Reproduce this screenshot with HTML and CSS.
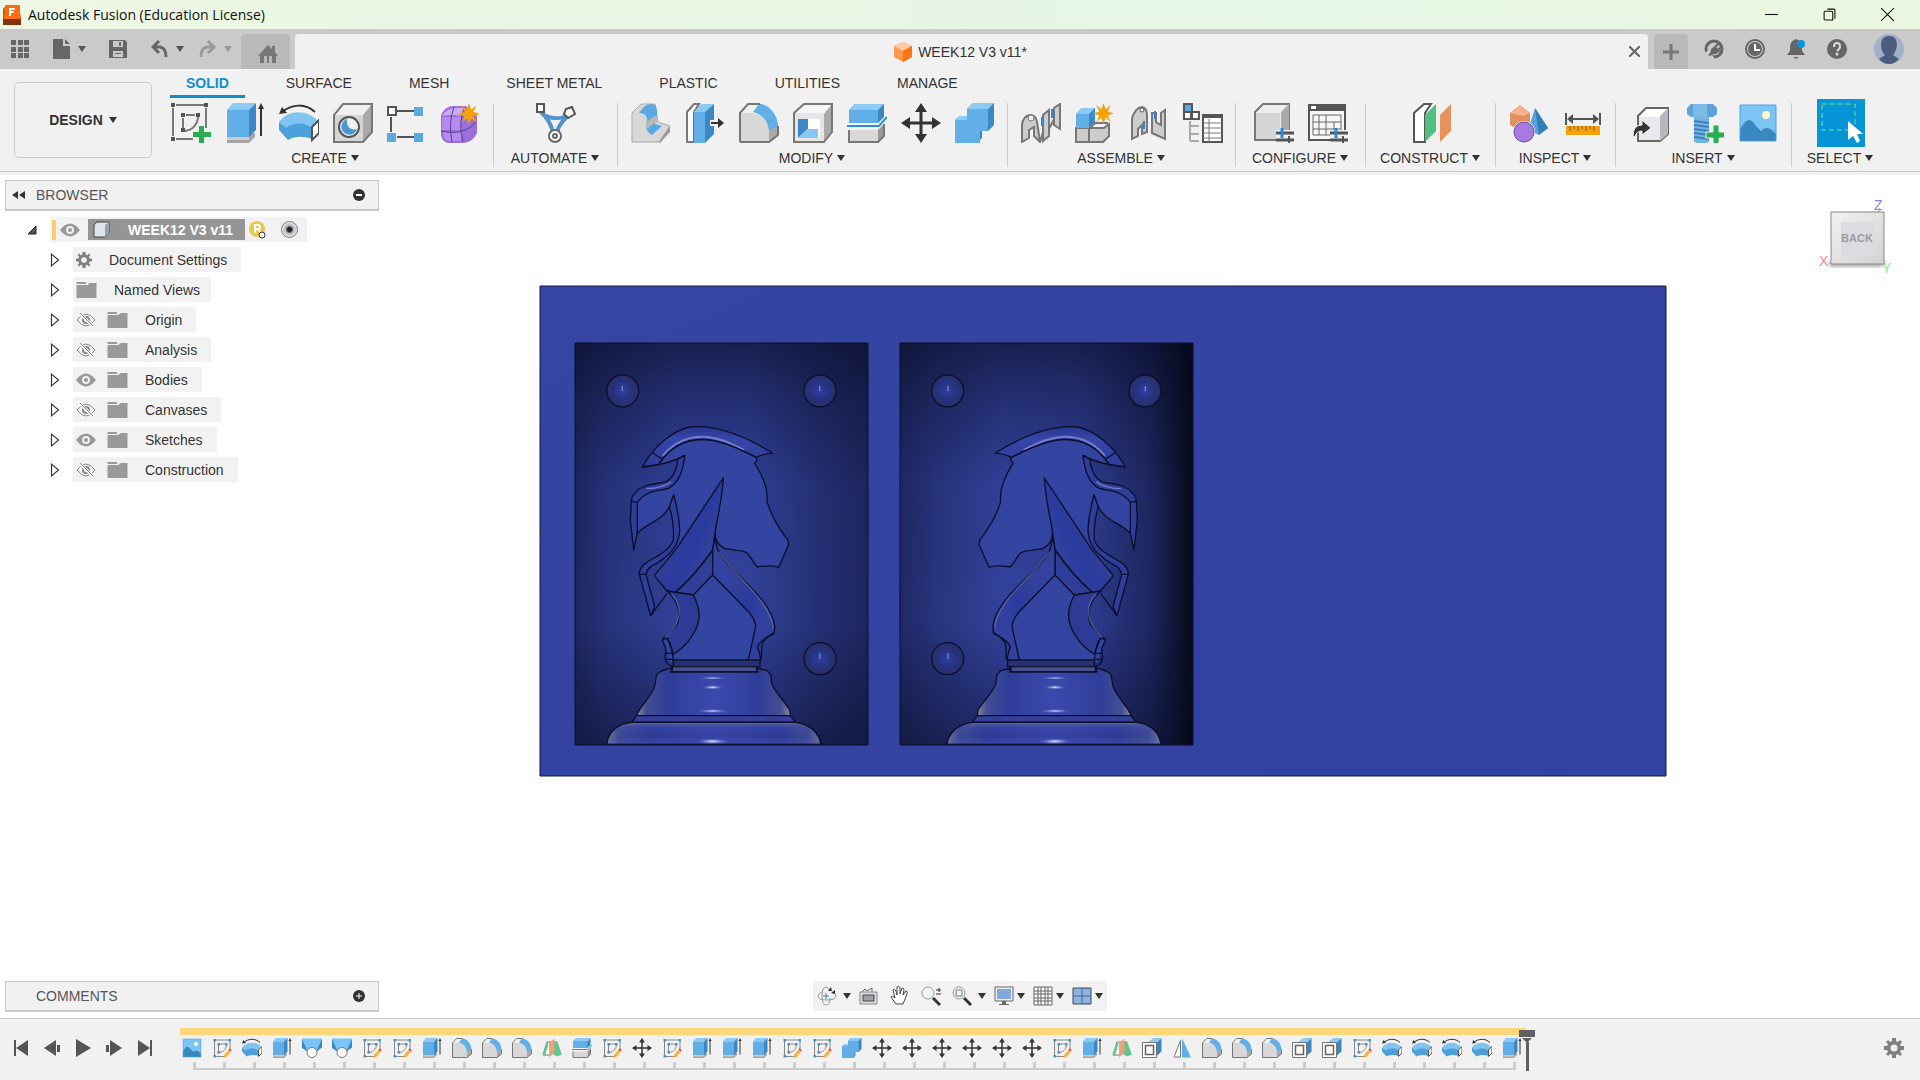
FILE: index.html
```html
<!DOCTYPE html>
<html lang="en">
<head>
<meta charset="utf-8">
<title>Autodesk Fusion (Education License)</title>
<link rel="stylesheet" href="styles.css">
</head>
<body>
<svg class="defs" aria-hidden="true">
  <symbol id="sketch" viewBox="0 0 40 40"><path d="M2 5v28M5 2h28M35 5v20M5 36h17M12 15v10M15 12h9M27 13c0 8-5 14-13 15" fill="none" stroke="#777" stroke-width="2"/><path d="M0 0h4v4H0zM33 0h4v4h-4zM0 34h4v4H0zM10 10h4v4h-4zM25 10h4v4h-4zM10 25h4v4h-4z" fill="#555"/><path d="M28 23h5v6h7v5h-7v6h-5v-6h-6v-5h6z" fill="#27ae4f"/></symbol>
  <symbol id="sketchedit" viewBox="0 0 40 40"><path d="M5 6v28M6 4h28M36 6v18M6 37h18M13 14v14M15 12h12M29 13c0 8-6 15-14 16" fill="none" stroke="#888" stroke-width="2"/><path d="M3 2h5v5H3zM33 2h5v5h-5zM3 34h5v5H3zM11 10h5v5h-5zM26 10h5v5h-5zM11 26h5v5h-5z" fill="#3b95d8"/><path d="M24 34l9-11 5 4-9 11-6 2z" fill="#f5b342"/><path d="M33 23l2-2q4 0 4 5l-1 1z" fill="#ef3d2e"/></symbol>
  <symbol id="extrude" viewBox="0 0 40 40"><path d="M2 36l6-6h22v4l-6 6H2z" fill="#a5a5a5"/><path d="M2 33h22v4H2z" fill="#ccc"/><path d="M2 7l6-7h23l-7 7z" fill="#8ccbf5"/><path d="M2 7h22v27H2z" fill="#62aee6"/><path d="M24 7l7-7v27l-7 7z" fill="#3b88c4"/><path d="M36 5v28" stroke="#333" stroke-width="2"/><path d="M33 6l3-6 3 6z" fill="#333"/></symbol>
  <symbol id="revolve" viewBox="0 0 40 40"><path d="M3 9C13 1 26 0 36 9" fill="none" stroke="#333" stroke-width="2"/><path d="M0 11l3-7 5 6z" fill="#333"/><path d="M0 19C9 6 29 6 40 19L33 25C27 20 14 20 7 27z" fill="#80c4f2"/><path d="M0 19l7 6c8-6 19-6 26 0v11c-8-3-17-3-24 1L0 27z" fill="#4d9fdc"/><path d="M33 24l7-7v13l-7 7z" fill="#fff" stroke="#555" stroke-width="2"/></symbol>
  <symbol id="hole" viewBox="0 0 40 40"><path d="M1 12L10 1h29l-9 11z" fill="#f0f0f0"/><path d="M30 12l9-11v28l-9 10z" fill="#aaa"/><path d="M1 12h29v27H1z" fill="#d5d5d5"/><path d="M1 39V12L10 1h29v28l-9 10z" fill="none" stroke="#777" stroke-width="2"/><circle cx="16" cy="24" r="10" fill="#eee" stroke="#555" stroke-width="2"/><path d="M14 16a8 8 0 1 0 10 10c-6 2-11-2-10-10z" fill="#4a98d3"/></symbol>
  <symbol id="pattern" viewBox="0 0 40 40"><path d="M10 8h17M4 14v15M10 34h17" stroke="#555" stroke-width="2"/><path d="M1 4h8v8H1z" fill="#fff" stroke="#555" stroke-width="2"/><path d="M27 4h9v9h-9zM0 30h9v9H0zM27 30h9v9h-9z" fill="#5ba9e0"/></symbol>
  <symbol id="form" viewBox="0 0 40 40"><path d="M0 12Q4 3 13 3h12l11 10v17q-4 9-13 10H7q-7-2-7-9z" fill="#9a6fdb"/><path d="M1 13q3-6 12-8h12l-5 8q-12-2-19 0z" fill="#c9adf3"/><path d="M1 14h19v13H1zM2 29h18v9H7q-5-2-5-9z" fill="#b48cf0"/><path d="M0 28q15 3 21 0 10-3 14-10M13 4q-6 16-2 35M23 5q-6 16-1 34" fill="none" stroke="#5c3e93" stroke-width="1"/><use href="#star" x="17" y="0" width="22" height="22"/></symbol>
  <symbol id="star" viewBox="0 0 20 20"><path d="M10 0l2 6 5-4-3 6 6 2-6 2 3 6-5-4-2 6-2-6-5 4 3-6-6-2 6-2-3-6 5 4z" fill="#f5a10a"/></symbol>
  <symbol id="automate" viewBox="0 0 40 40"><path d="M4 8Q14 17 17 29M36 10Q24 18 21 29M6 11q14 8 27 1" fill="none" stroke="#5095cc" stroke-width="4"/><path d="M15 17h9l-4 8z" fill="#f0f0f0"/><path d="M1 1h7v8H1zM30 6l6-2 3 7-7 4-4-4z" fill="#fff" stroke="#555" stroke-width="2"/><circle cx="19" cy="33" r="6" fill="#fff" stroke="#666" stroke-width="2"/><circle cx="19" cy="33" r="2" fill="none" stroke="#666" stroke-width="2"/></symbol>
  <symbol id="presspull" viewBox="0 0 40 40"><path d="M1 10L10 1h14l3 18 12 4-11 16H1z" fill="#d8d8d8" stroke="#aaa" stroke-width="1"/><path d="M28 39l11-16v6l-10 11z" fill="#999"/><path d="M8 10Q14 0 22 1q5 2 4 12-3 6-2 8l7 2-10 9q-8-4-5-13 1-9-8-9z" fill="#5ba9e0"/><path d="M15 19l10-7 1 6-10 8z" fill="#b8b8b8"/></symbol>
  <symbol id="offset" viewBox="0 0 40 40"><path d="M2 39V9l7-8h5L9 9v30z" fill="#fff" stroke="#777" stroke-width="2"/><path d="M9 9h11v31H9z" fill="#62aee6"/><path d="M9 9l7-8h13l-8 8z" fill="#8ccbf5"/><path d="M20 9l9-8v30l-9 9z" fill="#3b88c4"/><path d="M25 20h10" stroke="#f1f1f1" stroke-width="6"/><path d="M26 20h9" stroke="#333" stroke-width="2"/><path d="M33 15l6 5-6 5z" fill="#333"/></symbol>
  <symbol id="fillet" viewBox="0 0 40 40"><path d="M1 10L9 1h12c10 2 18 12 18 22v9l-9 7H1z" fill="#efefef"/><path d="M30 28l9-6v10l-9 7z" fill="#aaa"/><path d="M1 10h12c9 1 17 9 17 18v11H1z" fill="#d8d8d8"/><path d="M20 1h2c10 2 17 12 17 22l-9 5C29 17 22 11 14 9z" fill="#62aee6"/><path d="M1 39V10L9 1h12M1 39h29l9-7v-9" fill="none" stroke="#777" stroke-width="2"/></symbol>
  <symbol id="shell" viewBox="0 0 40 40"><path d="M1 10L11 1h28l-8 10z" fill="#f7f7f7"/><path d="M31 11l8-10v28l-8 10z" fill="#aaa"/><path d="M1 10h30v29H1z" fill="#e5e5e5"/><path d="M1 39V10l10-9h28v28l-8 10z" fill="none" stroke="#777" stroke-width="2"/><path d="M5 16h22v19H5z" fill="#fff"/><path d="M5 16h10v10L5 35z" fill="#3b88c4"/><path d="M5 35l9-9h11v9z" fill="#86c7f4"/></symbol>
  <symbol id="split" viewBox="0 0 40 40"><path d="M2 7l6-6h29v13l-6 6H2z" fill="#3b88c4"/><path d="M2 7l6-6h29l-6 6z" fill="#8ccbf5"/><path d="M2 7h29v13H2z" fill="#62aee6"/><path d="M0 23h32l8-9" fill="none" stroke="#318ed5" stroke-width="2"/><path d="M2 27h29v12H2z" fill="#d8d8d8"/><path d="M31 27l6-6v12l-6 6z" fill="#999"/><path d="M2 27v12h29l6-6V21" fill="none" stroke="#777" stroke-width="2"/></symbol>
  <symbol id="move" viewBox="0 0 40 40"><path d="M20 7v26M7 20h26" stroke="#333" stroke-width="3"/><path d="M20 0l6 9H14zM20 40l6-9H14zM0 20l9-6v12zM40 20l-9-6v12z" fill="#333"/></symbol>
  <symbol id="combine" viewBox="0 0 40 40"><path d="M0 17l5-4h7V6l6-6h21v22l-6 6h-6v7l-5 5H0z" fill="#3b88c4"/><path d="M0 17l5-4h10l-3 4zM12 6l6-6h21l-6 6z" fill="#8ccbf5"/><path d="M12 6h21v22h-8v12H0V17h12z" fill="#62aee6"/></symbol>
  <symbol id="joint" viewBox="0 0 40 40"><g fill="#ccc" stroke="#777" stroke-width="2"><path d="M1 39V22q1-9 8-10 6 0 7 7l3 20-6-6v-9l-5 3v8z"/><path d="M22 38V12l6-5v26zM33 22V5l6-4v25z"/><path d="M19 39l3-10M28 26l5-10"/></g><circle cx="10" cy="15" r="3" fill="#eee" stroke="#777"/><path d="M21 14v9M31 6v9" stroke="#2889d8" stroke-width="2"/></symbol>
  <symbol id="component" viewBox="0 0 40 40"><path d="M1 25h28l5-4v12l-6 6H1z" fill="#ccc" stroke="#777" stroke-width="2"/><path d="M1 25V11l6-6h13v14l-6 6z" fill="#3b88c4"/><path d="M1 11h13v14H1z" fill="#62aee6"/><path d="M1 11l6-6h13l-6 6z" fill="#8ccbf5"/><path d="M14 25v14M15 25l5-5h13" fill="none" stroke="#777" stroke-width="2"/><use href="#star" x="18" y="0" width="21" height="21"/></symbol>
  <symbol id="asbuilt" viewBox="0 0 40 40"><g fill="#ccc" stroke="#777" stroke-width="2"><path d="M3 36V15Q7 4 13 4q5 1 5 8v17l-5 2v-9l-4 4v7z"/><path d="M23 10v20l13 6V7l-4 3v12l-5-3v-9z"/></g><circle cx="13" cy="7" r="2" fill="#fff" stroke="#555"/><path d="M15 18v8M26 8v8" stroke="#2889d8" stroke-width="2"/></symbol>
  <symbol id="bom" viewBox="0 0 40 40"><path d="M1 1h8v8H1z" fill="#5ba9e0" stroke="#555" stroke-width="2"/><path d="M1 9h7v7H1zM9 9h7v7H9z" fill="#fff" stroke="#555" stroke-width="2"/><path d="M7 18v20M7 23h9M7 31h9M7 38h9" stroke="#aaa" stroke-width="2"/><path d="M20 12h19v27H20z" fill="#fff" stroke="#555" stroke-width="2"/><path d="M20 13h19" stroke="#555" stroke-width="4"/><path d="M20 20h19M20 25h19M20 30h19M20 35h19M26 16v23" stroke="#777" stroke-width="1"/></symbol>
  <symbol id="confbox" viewBox="0 0 40 40"><path d="M1 9l8-8h26v28l-8 8H1z" fill="#ededed" stroke="#777" stroke-width="2"/><path d="M2 10h24v26H2z" fill="#d5d5d5"/><path d="M27 9l8-8v28l-8 8z" fill="#aaa"/><use href="#sliders"/></symbol>
  <symbol id="sliders" viewBox="0 0 40 40"><path d="M22 27h18v13H22z" fill="#f1f1f1"/><path d="M22 30h18M22 37h18" stroke="#555" stroke-width="3"/><path d="M28 25v10" stroke="#2889d8" stroke-width="3"/><path d="M35 33v8" stroke="#555" stroke-width="2"/></symbol>
  <symbol id="conftable" viewBox="0 0 40 40"><path d="M1 2h36v35H1z" fill="#f7f7f7" stroke="#555" stroke-width="2"/><path d="M1 5h36" stroke="#555" stroke-width="6"/><path d="M3 3h5v3H3z" fill="#fff"/><path d="M5 12h28v20H5zM5 19h28M5 26h28M11 12v20M18 12v20M26 19v13" fill="none" stroke="#666" stroke-width="1"/><use href="#sliders"/></symbol>
  <symbol id="plane" viewBox="0 0 40 40"><path d="M3 10L13 1h7l-6 9v29H3z" fill="#fff" stroke="#555" stroke-width="2"/><path d="M14 12L25 1v27L14 39z" fill="#4fc07f"/><path d="M29 12L40 1v27L29 39z" fill="#e8935a"/></symbol>
  <symbol id="shapes" viewBox="0 0 40 40"><path d="M11 2l10 8v12l-10 6-10-6V10z" fill="#e2905e"/><path d="M11 2l10 8-7 3-13-3z" fill="#f3b48d"/><path d="M26 5l13 20-9 7-11-5z" fill="#5aa2dd"/><path d="M26 5l13 20-9 7z" fill="#357fb9"/><circle cx="15" cy="29" r="11" fill="#f1f1f1"/><circle cx="15" cy="29" r="10" fill="#a67ae0" stroke="#6e49a6"/></symbol>
  <symbol id="measure" viewBox="0 0 40 40"><path d="M3 10v12M37 10v12M5 16h30" stroke="#555" stroke-width="2"/><path d="M4 16l6-5v10zM36 16l-6-5v10z" fill="#555"/><path d="M3 23h34v9H3z" fill="#f5a10a"/><path d="M7 23v5M11 23v3M15 23v5M19 23v3M23 23v5M27 23v3M31 23v5" stroke="#7b520b" stroke-width="1"/></symbol>
  <symbol id="insert" viewBox="0 0 40 40"><path d="M8 13l8-8h22v26l-8 7H8z" fill="#fff" stroke="#666" stroke-width="2"/><path d="M30 13l8-8v26l-8 7z" fill="#b5b8c0"/><path d="M9 14h21v23H9z" fill="#e8e9ed"/><path d="M3 33q0-11 9-11v-5l9 8-9 7v-4q-6 0-7 6z" fill="#333" stroke="#f1f1f1" stroke-width="1"/></symbol>
  <symbol id="bolt" viewBox="0 0 40 40"><path d="M3 5l4-4h22l4 4v6l-4 3H7l-4-3z" fill="#5ba3d9"/><path d="M9 1h14v13H9z" fill="#7cbbe8"/><path d="M10 14h15v25q-7 3-15 0z" fill="#74b4e3"/><path d="M10 18l15 2M10 22l15 2M10 26l15 2M10 30l15 2M10 34l15 2" stroke="#3b80b8" stroke-width="2"/><path d="M29 22h6v7h6v6h-6v6h-6v-6h-7v-6h7z" fill="#27ae4f" stroke="#f1f1f1"/></symbol>
  <symbol id="picture" viewBox="0 0 40 40"><path d="M2 2h36v36H2z" fill="#7cc4f5"/><path d="M2 27Q10 10 18 23l5 5q6-7 15 3v7H2z" fill="#3a88c2"/><circle cx="28" cy="12" r="4" fill="#ffffd0"/><path d="M2 2h36v36H2z" fill="none" stroke="#4a9fdb"/></symbol>
  <symbol id="select" viewBox="0 0 48 48"><path d="M5 5h33v26H5z" fill="none" stroke="#6fe38d" stroke-width="1" stroke-dasharray="5 3"/><path d="M31 22v19l5-4 4 7 3-2-3-7h6z" fill="#fff"/></symbol>
  <symbol id="loft" viewBox="0 0 40 40"><path d="M0 1h40l-10 27H12z" fill="#7cc4f5"/><path d="M0 1l12 27L0 20zM40 1L28 28l12-9z" fill="#3a88c2"/><circle cx="20" cy="29" r="10" fill="#fff" stroke="#777" stroke-width="2"/></symbol>
  <symbol id="draft" viewBox="0 0 40 40"><path d="M10 8h8v26H2z" fill="#fff" stroke="#777" stroke-width="2"/><path d="M22 7h8l9 26-9 3-8-4z" fill="#5fc98c" stroke="#6aa"/><path d="M14 10l11-9v28l-11 10z" fill="#eda27b"/><path d="M10 8L1 33l5 2 7-23z" fill="#5fc98c"/></symbol>
  <symbol id="scale" viewBox="0 0 40 40"><path d="M12 12L23 1h16v26L27 38z" fill="#3a88c2"/><path d="M12 9l9-8h18l-9 8z" fill="#8ccbf5"/><path d="M1 9h28v30H1z" fill="#fff" stroke="#777" stroke-width="2"/><path d="M7 15h16v18H7z" fill="#fff" stroke="#666" stroke-width="3"/></symbol>
  <symbol id="mirror" viewBox="0 0 40 40"><path d="M17 5v33H4z" fill="#fff" stroke="#777" stroke-width="2"/><path d="M20 0l18 39H20z" fill="#62aee6"/></symbol>
  <symbol id="gear" viewBox="0 0 20 20"><path fill-rule="evenodd" d="M8 0h4v3l2 1 2-2 2 2-2 3 1 1h3v4h-3l-1 2 2 2-2 2-2-2-2 1v3H8v-3l-2-1-2 2-2-2 2-2-1-2H0V8h3l1-2-2-2 2-2 2 2 2-1zM10 6.500a3.500 3.500 0 1 0 0 7 3.500 3.500 0 0 0 0-7z" fill="#808080"/></symbol>
  <symbol id="folder" viewBox="0 0 20 16"><path d="M0 0h9l1 2H0zM0 3h11l2-2h7v15H0z" fill="#999"/></symbol>
  <symbol id="eye" viewBox="0 0 20 14"><path d="M0 7Q10-6 20 7 10 20 0 7z" fill="#999"/><circle cx="10" cy="7" r="3" fill="none" stroke="#f1f1f1" stroke-width="2"/></symbol>
  <symbol id="eyeoff" viewBox="0 0 20 14"><path d="M1 7Q10-5 19 7 10 19 1 7z" fill="none" stroke="#888"/><circle cx="10" cy="7" r="3" fill="none" stroke="#888" stroke-width="2"/><path d="M4 1l13 12" stroke="#f1f1f1" stroke-width="3"/><path d="M4 0l13 13" stroke="#888"/></symbol>
  <symbol id="tri" viewBox="0 0 8 12"><path d="M1 1v10l6-5z" fill="#fff" stroke="#333" stroke-width="1"/></symbol>
  <symbol id="down" viewBox="0 0 8 6"><path d="M0 0h8L4 6z" fill="currentColor"/></symbol>
</svg>

<header class="titlebar">
  <svg class="app-logo" viewBox="0 0 18 20"><path d="M3 1l13-1 2 14v6H0V4z" fill="#c84f08"/><path d="M2 0h15v15H1z" fill="#ff6b0a"/><path d="M0 14h18v6H0z" fill="#843309"/><path d="M7 11V4h5M7 7h4" stroke="#fff" stroke-width="2" fill="none"/></svg>
  <h1 class="app-title">Autodesk Fusion (Education License)</h1>
  <div class="window-buttons">
    <button aria-label="Minimize"><svg viewBox="0 0 12 12"><path d="M0 6h12" stroke="#111"/></svg></button>
    <button aria-label="Restore"><svg viewBox="0 0 12 12"><path d="M1 4q0-1 1-1h6q1 0 1 1v7H2q-1 0-1-1zM4 1h6q1 0 1 1v8" fill="none" stroke="#111"/></svg></button>
    <button aria-label="Close"><svg viewBox="0 0 12 12"><path d="M0 0l12 12M12 0L0 12" stroke="#111"/></svg></button>
  </div>
</header>

<div class="tabbar">
  <div class="quick">
    <button aria-label="Data panel"><svg width="18" height="18" viewBox="0 0 18 18"><path d="M0 0h5v5H0zM7 0h5v5H7zM13 0h5v5h-5zM0 7h5v5H0zM7 7h5v5H7zM13 7h5v5h-5zM0 13h5v5H0zM7 13h5v5H7zM13 13h5v5h-5z" fill="#666"/></svg></button>
    <button class="file" aria-label="File"><svg width="17" height="20" viewBox="0 0 17 20"><path d="M0 0h10v7h7v13H0zM12 0l5 5h-5z" fill="#666"/></svg><svg class="arrow"><use href="#down"/></svg></button>
    <button class="save" aria-label="Save"><svg width="18" height="18" viewBox="0 0 18 18"><path fill-rule="evenodd" d="M0 0h16l2 2v16H0zM4 1v6h10V1zM4 11v6h10v-6z" fill="#666"/><path d="M10 2h2v4h-2zM6 13h6v1H6z" fill="#666"/></svg></button>
    <button class="undo" aria-label="Undo"><svg width="17" height="18" viewBox="0 0 17 18"><path d="M2 7h7q6 1 6 10M8 1L2 7l6 6" fill="none" stroke="#666" stroke-width="3"/></svg><svg class="arrow"><use href="#down"/></svg></button>
    <button class="redo" aria-label="Redo"><svg width="17" height="18" viewBox="0 0 17 18"><path d="M15 7H8q-6 1-6 10M9 1l6 6-6 6" fill="none" stroke="#999" stroke-width="3"/></svg><svg class="arrow"><use href="#down"/></svg></button>
  </div>
  <button class="home" aria-label="Home"><svg width="20" height="18" viewBox="0 0 20 18"><path d="M10 0l4 4V1h3v6l3 4h-2v7h-4v-7h-3v7H9v-7H6v7H2v-7H0z" fill="#777"/></svg></button>
  <div class="doc-tab">
    <svg width="18" height="20" viewBox="0 0 18 20"><path d="M9 0l9 4v11l-9 5-9-5V4z" fill="#ff9a4d"/><path d="M9 0l9 4-9 5-9-5z" fill="#ffc9a3"/><path d="M9 9l9-5v11l-9 5z" fill="#ff7410"/></svg>
    <span>WEEK12 V3 v11*</span>
    <button class="close" aria-label="Close document"><svg width="11" height="11" viewBox="0 0 11 11"><path d="M0 0l11 11M11 0L0 11" stroke="#666" stroke-width="2"/></svg></button>
  </div>
  <button class="new" aria-label="New design"><svg width="16" height="16" viewBox="0 0 16 16"><path d="M8 0v16M0 8h16" stroke="#777" stroke-width="3"/></svg></button>
  <div class="account">
    <button aria-label="Extensions"><svg viewBox="0 0 20 20"><circle cx="10" cy="10" r="8" fill="none" stroke="#666" stroke-width="3"/><path d="M0 14l5-3 2 4 4 5-6 0z" fill="#cacaca"/><path d="M4 16q3-2 3-6l4-3 5 5-4 3q-4 0-6 2z" fill="#666"/><path d="M11 8l4-4M14 11l4-4" stroke="#666" stroke-width="2"/></svg></button>
    <button aria-label="Job status"><svg viewBox="0 0 20 20"><circle cx="10" cy="10" r="9" fill="#ccc" stroke="#666" stroke-width="2"/><circle cx="10" cy="10" r="7" fill="#666"/><path d="M10 5v6h5" fill="none" stroke="#fff" stroke-width="2"/></svg></button>
    <button aria-label="Notifications"><svg viewBox="0 0 20 20"><path d="M10 0q6 2 6 8v4l3 4H1l3-4V8q0-6 6-8zM7 18h6l-3 2z" fill="#666"/><circle cx="15" cy="5" r="4" fill="#0696d7"/></svg></button>
    <button aria-label="Help"><svg viewBox="0 0 20 20"><circle cx="10" cy="10" r="10" fill="#666"/><path d="M7 8q0-4 3-4t3 3-3 5" fill="none" stroke="#ddd" stroke-width="2"/><circle cx="10" cy="15" r="1.500" fill="#ddd"/></svg></button>
    <button class="avatar" aria-label="Account"><svg viewBox="0 0 30 30"><circle cx="15" cy="15" r="15" fill="#a2b0cb"/><path d="M15 2q8 0 8 9-1 7-4 10l6 4q-4 5-10 5T5 25l6-4q-4-4-4-10 0-9 8-9z" fill="#4c5c7c"/></svg></button>
  </div>
</div>

<section class="ribbon">
  <button class="workspace">DESIGN <svg class="arrow"><use href="#down"/></svg></button>
  <div class="ribbon-main">
    <nav class="tabs">
      <a class="active" href="#">SOLID</a><a href="#">SURFACE</a><a href="#">MESH</a><a href="#">SHEET METAL</a><a href="#">PLASTIC</a><a href="#">UTILITIES</a><a href="#">MANAGE</a>
    </nav>
    <div class="groups">
      <div class="group"><div class="tools"><button aria-label="Create sketch"><svg><use href="#sketch"/></svg></button><button aria-label="Extrude"><svg><use href="#extrude"/></svg></button><button aria-label="Revolve"><svg><use href="#revolve"/></svg></button><button aria-label="Hole"><svg><use href="#hole"/></svg></button><button aria-label="Pattern"><svg><use href="#pattern"/></svg></button><button aria-label="Create form"><svg><use href="#form"/></svg></button></div><button class="label">CREATE<svg class="arrow"><use href="#down"/></svg></button></div>
      <div class="group automate"><div class="tools"><button aria-label="Automate"><svg><use href="#automate"/></svg></button></div><button class="label">AUTOMATE<svg class="arrow"><use href="#down"/></svg></button></div>
      <div class="group"><div class="tools"><button aria-label="Press pull"><svg><use href="#presspull"/></svg></button><button aria-label="Offset face"><svg><use href="#offset"/></svg></button><button aria-label="Fillet"><svg><use href="#fillet"/></svg></button><button aria-label="Shell"><svg><use href="#shell"/></svg></button><button aria-label="Split body"><svg><use href="#split"/></svg></button><button aria-label="Move"><svg><use href="#move"/></svg></button><button aria-label="Combine"><svg><use href="#combine"/></svg></button></div><button class="label">MODIFY<svg class="arrow"><use href="#down"/></svg></button></div>
      <div class="group"><div class="tools"><button aria-label="Joint"><svg><use href="#joint"/></svg></button><button aria-label="New component"><svg><use href="#component"/></svg></button><button aria-label="As-built joint"><svg><use href="#asbuilt"/></svg></button><button aria-label="Bill of materials"><svg><use href="#bom"/></svg></button></div><button class="label">ASSEMBLE<svg class="arrow"><use href="#down"/></svg></button></div>
      <div class="group wide"><div class="tools"><button aria-label="Configure"><svg><use href="#confbox"/></svg></button><button aria-label="Configuration table"><svg><use href="#conftable"/></svg></button></div><button class="label">CONFIGURE<svg class="arrow"><use href="#down"/></svg></button></div>
      <div class="group wide"><div class="tools"><button aria-label="Offset plane"><svg><use href="#plane"/></svg></button></div><button class="label">CONSTRUCT<svg class="arrow"><use href="#down"/></svg></button></div>
      <div class="group"><div class="tools"><button aria-label="Interference"><svg><use href="#shapes"/></svg></button><button aria-label="Measure"><svg><use href="#measure"/></svg></button></div><button class="label">INSPECT<svg class="arrow"><use href="#down"/></svg></button></div>
      <div class="group insert"><div class="tools"><button aria-label="Insert derive"><svg><use href="#insert"/></svg></button><button aria-label="Insert fastener"><svg><use href="#bolt"/></svg></button><button aria-label="Insert canvas"><svg><use href="#picture"/></svg></button></div><button class="label">INSERT<svg class="arrow"><use href="#down"/></svg></button></div>
      <div class="group last"><div class="tools"><button class="selected" aria-label="Select"><svg><use href="#select"/></svg></button></div><button class="label">SELECT<svg class="arrow"><use href="#down"/></svg></button></div>
    </div>
  </div>
</section>

<main class="viewport">
  <svg class="scene" viewBox="0 175 1920 843" role="img" aria-label="Knight mold model">
    <defs>
      <linearGradient id="body" x1="0" y1="0" x2="1" y2="1"><stop offset="0" stop-color="#3545a2"/><stop offset="1" stop-color="#3341a0"/></linearGradient>
      <linearGradient id="sides"><stop offset="0" stop-color="#05081c" stop-opacity=".48"/><stop offset=".1" stop-color="#05081c" stop-opacity=".3"/><stop offset=".35" stop-color="#05081c" stop-opacity=".06"/><stop offset=".6" stop-color="#05081c" stop-opacity=".05"/><stop offset=".82" stop-color="#05081c" stop-opacity=".32"/><stop offset="1" stop-color="#05081c" stop-opacity=".5"/></linearGradient>
      <linearGradient id="sides2"><stop offset="0" stop-color="#05081c" stop-opacity=".45"/><stop offset=".12" stop-color="#05081c" stop-opacity=".27"/><stop offset=".35" stop-color="#05081c" stop-opacity=".04"/><stop offset=".62" stop-color="#05081c" stop-opacity=".1"/><stop offset=".85" stop-color="#05081c" stop-opacity=".48"/><stop offset="1" stop-color="#03040a" stop-opacity=".92"/></linearGradient>
      <linearGradient id="ends" x2="0" y2="1"><stop offset="0" stop-color="#05081c" stop-opacity=".58"/><stop offset=".14" stop-color="#05081c" stop-opacity=".32"/><stop offset=".35" stop-color="#05081c" stop-opacity=".04"/><stop offset=".7" stop-color="#05081c" stop-opacity="0"/><stop offset="1" stop-color="#05081c" stop-opacity=".45"/></linearGradient>
      <linearGradient id="turned"><stop offset="0" stop-color="#8a8a9a"/><stop offset=".06" stop-color="#454f92"/><stop offset=".2" stop-color="#2f3d98"/><stop offset=".5" stop-color="#3b49ae"/><stop offset=".8" stop-color="#2f3d98"/><stop offset=".94" stop-color="#454f92"/><stop offset="1" stop-color="#8a8a9a"/></linearGradient>
      <linearGradient id="round" x2="0" y2="1"><stop offset="0" stop-color="#6d719c" stop-opacity=".8"/><stop offset=".25" stop-color="#3a48a8" stop-opacity=".4"/><stop offset=".6" stop-color="#2a3790" stop-opacity=".3"/><stop offset="1" stop-color="#4553bd" stop-opacity=".5"/></linearGradient>
      <linearGradient id="crest" x2="0" y2="1"><stop offset="0" stop-color="#28368c"/><stop offset=".3" stop-color="#3746a9"/><stop offset="1" stop-color="#2d3c96"/></linearGradient>
      <linearGradient id="dart" x1=".3" y1=".3" x2=".75" y2=".65"><stop offset="0" stop-color="#3342a0"/><stop offset=".35" stop-color="#2f3e98"/><stop offset=".65" stop-color="#2a3a9e"/><stop offset="1" stop-color="#32419d"/></linearGradient>
      <radialGradient id="dimple" cy=".5"><stop offset="0" stop-color="#3040a2"/><stop offset=".6" stop-color="#26327f"/><stop offset="1" stop-color="#2a3064"/></radialGradient>
      <radialGradient id="glint"><stop offset="0" stop-color="#e8eaff"/><stop offset="1" stop-color="#5562c8" stop-opacity="0"/></radialGradient>
      <g id="knight" stroke="#0b0f2b" stroke-width="4" stroke-linejoin="round" fill="none">
        <g fill="url(#dimple)"><circle cx="278" cy="183" r="48"/><circle cx="870" cy="183" r="48"/><circle cx="870" cy="986" r="48"/></g>
        <path d="M277 168v16M869 168v16M869 970v16" stroke="#7982cc" stroke-width="4"/>
        <path stroke="none" fill="#3444a1" d="M386 402C410 365 450 328 520 328 570 330 620 352 680 383L674 400C700 440 715 480 711 515 725 560 750 600 772 628Q778 638 774 648L746 712C730 705 700 708 682 711 670 700 664 680 650 668 640 660 600 660 585 656L555 630C560 670 600 710 600 710 660 770 730 830 734 908 700 920 682 935 682 950L690 997H420L398 928C450 900 465 840 411 783L373 737 449 620 431 494 418 530C400 570 350 580 323 609V517C350 480 380 485 415 475 445 460 460 420 464 376z"/>
        <path fill="url(#crest)" d="M337 411C370 350 430 300 480 291 560 284 640 315 727 369 710 372 690 374 680 383 620 352 570 330 520 328 450 328 410 365 386 404z"/>
        <path d="M400 375C440 330 490 318 530 321S600 340 640 358" stroke="#8790da" stroke-width="6" stroke-linecap="round" opacity=".75"/><path d="M337 411L386 404Q440 392 464 376M369 369l27 18M386 404C410 365 450 328 520 328 570 330 620 352 680 383"/>
        <path d="M680 383Q684 390 674 400C700 440 715 480 711 515 725 560 750 600 772 628Q778 638 774 648L746 712C730 705 700 708 682 711 670 700 664 680 650 668 640 660 600 660 585 656 565 645 556 635 555 610"/>
        <path fill="#2f3e9a" d="M464 376C460 420 445 460 415 475 380 485 350 480 322 517V609L311 660 301 570 304 515Q304 500 315 490C340 460 370 465 405 456 430 445 440 420 443 388z"/><path d="M304 514l19 3M323 609C350 580 400 570 418 530"/>
        <path d="M350 476Q400 474 424 455" stroke="#7882c8" stroke-width="4"/>
        <path fill="#2f3e9a" d="M431 494C440 530 448 560 449 600 447 640 430 670 380 700 360 708 350 720 348 733L374 830 362 857 328 733Q328 718 340 705C370 680 415 670 430 630 432 600 430 570 418 530z"/><path d="M328 733h20M362 857L411 790"/>
        <path fill="url(#dart)" d="M580 444L440 655 373 737 411 783 435 788C480 750 520 700 548 660L555 610C560 570 575 520 580 444z"/>
        <path fill="#2f3e98" d="M548 660V735L490 795 435 788C480 750 520 700 548 660z"/>
        <path fill="url(#dart)" d="M555 615C555 640 560 670 600 710 660 770 730 830 734 890L733 908C715 920 690 930 682 950 690 970 692 985 690 997L655 1005V990L677 890Q677 875 660 850L548 735V660z"/>
        <path fill="#2d3b96" d="M411 783L490 795C520 850 510 890 470 940 450 960 435 970 430 972L412 925 398 928C405 915 430 900 443 880 455 840 440 810 411 783z"/>
        <path d="M733 910Q700 925 696 945L694 990M398 928C395 940 410 945 408 965 400 990 410 1005 430 1010M412 925Q430 950 430 1005M408 970h22M408 988h22"/>
        <path d="M565 665C610 735 725 815 729 895M425 793C460 830 455 880 405 920" stroke="#8187ad" stroke-width="4" opacity=".5"/>
        <path fill="#263077" d="M430 990H690V1010H430z"/><path fill="#494d8a" d="M427 1010H680V1026H427z"/>
        <path fill="url(#turned)" d="M427 1012C410 1020 390 1020 382 1032 376 1040 378 1060 372 1075 355 1110 330 1130 323 1150L320 1157H781L779 1140C760 1110 730 1080 725 1060 724 1040 724 1030 710 1022L680 1014 684 1026H422z"/>
        <path fill="#34409a" d="M320 1157L305 1177H797L781 1157z"/>
        <path fill="url(#turned)" d="M230 1243C235 1200 270 1180 305 1177H797C840 1182 868 1210 873 1243z"/><path fill="url(#round)" d="M230 1243C235 1200 270 1180 305 1177H797C840 1182 868 1210 873 1243z"/>
        <g fill="url(#glint)" stroke="none"><ellipse cx="548" cy="1044" rx="40" ry="4"/><ellipse cx="548" cy="1072" rx="34" ry="7"/><ellipse cx="548" cy="1143" rx="46" ry="6"/><ellipse cx="548" cy="1234" rx="50" ry="9"/></g>
      </g>
    </defs>
    <path d="M540 286h1126v490H540z" fill="url(#body)" stroke="#151a3d"/>
    <path d="M575 343h293v402H575zM900 343h293v402H900z" fill="#3444a1"/>
    <path d="M575 343h293v402H575z" fill="url(#sides)"/><path d="M575 343h293v402H575z" fill="url(#ends)"/>
    <path d="M900 343h293v402H900z" fill="url(#sides2)"/><path d="M900 343h293v402H900z" fill="url(#ends)"/>
    <use href="#knight" transform="translate(530 330) scale(.333333)"/>
    <use href="#knight" transform="translate(1237.667 330) scale(-.333333 .333333)"/>
    <path d="M575 343h293v402H575zM900 343h293v402H900z" fill="none" stroke="#0b0f2b"/>
  </svg>

  <div class="overlay">
    <div class="top">
      <aside class="browser">
        <div class="panel"><svg width="13" height="8" viewBox="0 0 13 8"><path d="M0 4l6-4v8zM7 4l6-4v8z" fill="#333"/></svg><h2>BROWSER</h2><button aria-label="Collapse"><svg width="12" height="12" viewBox="0 0 12 12"><circle cx="6" cy="6" r="6" fill="#333"/><path d="M3 6h6" stroke="#fff" stroke-width="2"/></svg></button></div>
        <ul class="tree">
          <li class="root"><svg class="twist" width="10" height="10" viewBox="0 0 10 10"><path d="M9 1v8H1z" fill="#555" stroke="#222"/></svg><div class="node"><i class="bar"></i><svg class="eye"><use href="#eye"/></svg><div class="name"><svg width="17" height="17" viewBox="0 0 17 17"><path d="M1 4l3-3h12v11l-4 4H1z" fill="#dfe3ea" stroke="#444"/><path d="M12 4l4-3v11l-4 4z" fill="#9aa3b3"/></svg><b>WEEK12 V3 v11</b></div><svg width="18" height="18" viewBox="0 0 18 18"><circle cx="8" cy="8" r="8" fill="#e8c94a"/><path d="M6 12V4h3q2 0 2 2t-2 2H6m3 0l3 4" fill="none" stroke="#fff" stroke-width="2"/><circle cx="13" cy="14" r="3" fill="#fff" stroke="#333"/></svg><input type="radio" aria-label="Activate" checked></div></li>
          <li><svg class="twist"><use href="#tri"/></svg><div class="node"><svg class="gear"><use href="#gear"/></svg><span>Document Settings</span></div></li>
          <li><svg class="twist"><use href="#tri"/></svg><div class="node views"><svg class="folder"><use href="#folder"/></svg><span>Named Views</span></div></li>
          <li><svg class="twist"><use href="#tri"/></svg><div class="node"><svg class="eye"><use href="#eyeoff"/></svg><svg class="folder"><use href="#folder"/></svg><span>Origin</span></div></li>
          <li><svg class="twist"><use href="#tri"/></svg><div class="node"><svg class="eye"><use href="#eyeoff"/></svg><svg class="folder"><use href="#folder"/></svg><span>Analysis</span></div></li>
          <li><svg class="twist"><use href="#tri"/></svg><div class="node"><svg class="eye"><use href="#eye"/></svg><svg class="folder"><use href="#folder"/></svg><span>Bodies</span></div></li>
          <li><svg class="twist"><use href="#tri"/></svg><div class="node"><svg class="eye"><use href="#eyeoff"/></svg><svg class="folder"><use href="#folder"/></svg><span>Canvases</span></div></li>
          <li><svg class="twist"><use href="#tri"/></svg><div class="node"><svg class="eye"><use href="#eye"/></svg><svg class="folder"><use href="#folder"/></svg><span>Sketches</span></div></li>
          <li><svg class="twist"><use href="#tri"/></svg><div class="node"><svg class="eye"><use href="#eyeoff"/></svg><svg class="folder"><use href="#folder"/></svg><span>Construction</span></div></li>
        </ul>
      </aside>
      <svg class="cube" width="74" height="82" viewBox="0 0 74 82" role="img" aria-label="View cube">
        <defs><linearGradient id="face" x2="1" y2="1"><stop offset="0" stop-color="#f2f2f2"/><stop offset="1" stop-color="#d2d2d4"/></linearGradient><filter id="soft"><feGaussianBlur stdDeviation="2"/></filter></defs>
        <path d="M8 65h60l-6 6H12z" fill="#aaa" filter="url(#soft)"/>
        <path d="M60 12v8" stroke="#8a8af5"/>
        <text class="axis" x="55" y="14" fill="#8a80f8">Z</text><text class="axis" x="0" y="70" fill="#ff8585">X</text><text class="axis" x="63" y="77" fill="#80f080">Y</text>
        <path d="M12 16h53v52H12z" fill="url(#face)" stroke="#888"/><path d="M22 26h33v33H22z" fill="#dadce0"/>
        <text class="facename" x="38" y="46" text-anchor="middle">BACK</text>
      </svg>
    </div>
    <div class="bottom">
      <div class="panel comments"><h2>COMMENTS</h2><button aria-label="Expand comments"><svg width="12" height="12" viewBox="0 0 12 12"><circle cx="6" cy="6" r="6" fill="#333"/><path d="M3 6h6M6 3v6" stroke="#fff" stroke-width="1"/></svg></button></div>
      <div class="navbar">
        <button class="spaced" aria-label="Orbit"><svg viewBox="0 0 20 20"><path d="M6 6Q1 7 1 10q0 4 9 4 8 0 9-4 0-3-4-4" fill="none" stroke="#999"/><path d="M13 5Q12 1 9 1 5 1 5 10t4 9q4 0 4-7" fill="none" stroke="#999"/><path d="M9 7v6M6 10h6" stroke="#3a80c9"/><path d="M11 5l3-4 1 4zM14 7l4-3v4z" fill="#333"/></svg><svg class="arrow"><use href="#down"/></svg></button>
        <button class="plain" aria-label="Look at"><svg viewBox="0 0 20 20"><path d="M3 6l3-3 2 2 5-3v4" fill="none" stroke="#666" stroke-width="1"/><path d="M1 6h17v12H1z" fill="#ddd" stroke="#888"/><path d="M4 9h11v6H4z" fill="#9aa1ac" stroke="#444"/></svg></button>
        <button class="plain" aria-label="Pan"><svg viewBox="0 0 20 20"><path d="M6 18L1 11q1-2 4 1L3 4q1-2 3 1l1 4V1q2-2 3 1v6l2-6q2 0 2 2l-1 5 3-4q2 0 1 3l-4 10z" fill="#fff" stroke="#444"/></svg></button>
        <button class="plain" aria-label="Zoom"><svg viewBox="0 0 20 20"><circle cx="7" cy="7" r="6" fill="#eef6f6" stroke="#999" stroke-width="1"/><path d="M12 12l7 7" stroke="#333" stroke-width="3"/><path d="M15 4h5M18 2v4M15 8h5" stroke="#333"/></svg></button>
        <button class="spaced" aria-label="Zoom window"><svg viewBox="0 0 20 20"><circle cx="7" cy="7" r="6" fill="#eef6f6" stroke="#999" stroke-width="1"/><path d="M12 12l7 7" stroke="#333" stroke-width="3"/><path d="M4 4h6v6H4z" fill="none" stroke="#777"/></svg><svg class="arrow"><use href="#down"/></svg></button>
        <button aria-label="Display settings"><svg viewBox="0 0 20 20"><path d="M1 1h18v14H1z" fill="#eee" stroke="#666"/><path d="M3 3h14v10H3z" fill="#82a9dc"/><path d="M8 15h4v3h3v1H5v-1h3z" fill="#666"/></svg><svg class="arrow"><use href="#down"/></svg></button>
        <button aria-label="Grid and snaps"><svg viewBox="0 0 20 20"><path d="M1 1h18v18H1zM5 1v18M8 1v18M12 1v18M15 1v18M1 5h18M1 8h18M1 12h18M1 15h18" fill="#f8f8f8" stroke="#666"/></svg><svg class="arrow"><use href="#down"/></svg></button>
        <button aria-label="Viewports"><svg viewBox="0 0 20 20"><path d="M1 2h18v16H1z" fill="#8db3e2" stroke="#445"/><path d="M10 2v16M1 10h18" stroke="#47658e"/></svg><svg class="arrow"><use href="#down"/></svg></button>
      </div>
    </div>
  </div>
</main>

<footer class="timeline-panel">
  <div class="playback">
    <button aria-label="To start"><svg viewBox="0 0 20 20"><path d="M3 2h2v16H3zM17 2v16L5 10z" fill="#555"/></svg></button>
    <button aria-label="Step back"><svg viewBox="0 0 20 20"><path d="M14 2v16L2 10zM15 7h3v7h-3z" fill="#555"/></svg></button>
    <button aria-label="Play"><svg viewBox="0 0 20 20"><path d="M3 1v18l15-9z" fill="#555"/></svg></button>
    <button aria-label="Step forward"><svg viewBox="0 0 20 20"><path d="M6 2v16l12-8zM2 7h3v7H2z" fill="#555"/></svg></button>
    <button aria-label="To end"><svg viewBox="0 0 20 20"><path d="M15 2h2v16h-2zM3 2v16l12-8z" fill="#555"/></svg></button>
  </div>
  <div class="history">
    <ol>
      <li><svg><use href="#picture"/></svg></li><li><svg><use href="#sketchedit"/></svg></li><li><svg><use href="#revolve"/></svg></li><li><svg><use href="#extrude"/></svg></li><li><svg><use href="#loft"/></svg></li><li><svg><use href="#loft"/></svg></li><li><svg><use href="#sketchedit"/></svg></li><li><svg><use href="#sketchedit"/></svg></li><li><svg><use href="#extrude"/></svg></li><li><svg><use href="#fillet"/></svg></li><li><svg><use href="#fillet"/></svg></li><li><svg><use href="#fillet"/></svg></li><li><svg><use href="#draft"/></svg></li><li><svg><use href="#split"/></svg></li><li><svg><use href="#sketchedit"/></svg></li><li><svg><use href="#move"/></svg></li><li><svg><use href="#sketchedit"/></svg></li><li><svg><use href="#extrude"/></svg></li><li><svg><use href="#extrude"/></svg></li><li><svg><use href="#extrude"/></svg></li><li><svg><use href="#sketchedit"/></svg></li><li><svg><use href="#sketchedit"/></svg></li><li><svg><use href="#combine"/></svg></li><li><svg><use href="#move"/></svg></li><li><svg><use href="#move"/></svg></li><li><svg><use href="#move"/></svg></li><li><svg><use href="#move"/></svg></li><li><svg><use href="#move"/></svg></li><li><svg><use href="#move"/></svg></li><li><svg><use href="#sketchedit"/></svg></li><li><svg><use href="#extrude"/></svg></li><li><svg><use href="#draft"/></svg></li><li><svg><use href="#scale"/></svg></li><li><svg><use href="#mirror"/></svg></li><li><svg><use href="#fillet"/></svg></li><li><svg><use href="#fillet"/></svg></li><li><svg><use href="#fillet"/></svg></li><li><svg><use href="#scale"/></svg></li><li><svg><use href="#scale"/></svg></li><li><svg><use href="#sketchedit"/></svg></li><li><svg><use href="#revolve"/></svg></li><li><svg><use href="#revolve"/></svg></li><li><svg><use href="#revolve"/></svg></li><li><svg><use href="#revolve"/></svg></li><li><svg><use href="#extrude"/></svg></li>
    </ol>
    <svg class="marker" width="16" height="42" viewBox="0 0 16 42"><path d="M0 0h16v7H0zM3 8h10l-5 5zM7 12h3v29H7z" fill="#606060"/></svg>
  </div>
  <button class="settings" aria-label="Timeline settings"><svg width="20" height="20"><use href="#gear"/></svg></button>
</footer>
</body>
</html>
```
FILE: styles.css
```css
* { box-sizing: border-box; }
body { margin: 0; min-height: 100vh; display: flex; flex-direction: column; background: #fff; color: #333; font: 14px/20px "Liberation Sans", Arial, sans-serif; }
button { border: 0; padding: 0; margin: 0; background: none; color: inherit; font: inherit; display: flex; align-items: center; justify-content: center; }
svg { display: block; flex: none; }
h1, h2, ul, ol { margin: 0; padding: 0; font-size: inherit; font-weight: normal; list-style: none; }
.defs { position: absolute; width: 0; height: 0; }
.arrow { width: 8px; height: 6px; }

.titlebar { display: flex; align-items: center; height: 29px; padding-left: 3px; background: linear-gradient(90deg, #edf7e3, #e9f6e4 35%, #e5f7e5 70%, #ecf7e1); color: #111; }
.app-logo { width: 18px; height: 20px; }
.app-title { margin-left: 7px; font: 14px/20px "Open Sans", sans-serif; }
.window-buttons { display: flex; margin-left: auto; padding-right: 4px; }
.window-buttons button { width: 58px; height: 29px; }
.window-buttons svg { width: 13px; height: 13px; }

.tabbar { display: flex; align-items: stretch; height: 40px; padding-top: 5px; background: #cacaca; }
.quick { display: flex; align-items: center; width: 241px; padding-left: 11px; padding-bottom: 5px; color: #555; }
.quick .arrow { margin-left: 8px; }
.quick .file { margin-left: 24px; }
.quick .save { margin-left: 23px; }
.quick .undo { margin-left: 24px; }
.quick .redo { margin-left: 15px; color: #999; }
.home { width: 49px; padding: 4px 0 0 5px; border-radius: 4px 4px 0 0; background: #b9b9b9; }
.doc-tab { flex: 1; display: flex; align-items: center; justify-content: center; gap: 6px; margin: 0 6px 0 5px; padding-right: 22px; border-radius: 4px 4px 0 0; background: #f1f1f1; position: relative; }
.doc-tab .close { position: absolute; right: 8px; top: 12px; }
.new { width: 34px; border-radius: 4px 4px 0 0; background: #b9b9b9; }
.account { display: flex; align-items: center; width: 232px; padding: 0 16px 5px; gap: 21px; }
.account svg { width: 20px; height: 20px; }
.account .avatar { margin-left: 6px; }
.account .avatar svg { width: 30px; height: 30px; }

.ribbon { display: flex; height: 106px; padding-left: 14px; background: linear-gradient(#c8c8c8, #c8c8c8) 0 102px / 100% 1px no-repeat #f1f1f1; }
.workspace { width: 138px; height: 76px; margin-top: 13px; gap: 6px; border: 1px solid #ccc; border-radius: 5px; font-weight: bold; }
.ribbon-main { flex: 1; padding-left: 6px; }
.tabs { display: flex; gap: 25px; padding-left: 12px; }
.tabs a { padding: 4px 16px 2px; color: #333; text-decoration: none; border-bottom: 3px solid transparent; }
.tabs .active { color: #0e8fce; font-weight: bold; border-color: #0e8fce; }
.groups { display: flex; padding-top: 1px; }
.group { padding: 0 6px; background: linear-gradient(#ccc, #ccc) right 4px / 1px 64px no-repeat; height: 72px; }
.tools { display: flex; justify-content: center; }
.tools button { width: 54px; height: 48px; }
.tools svg { width: 40px; height: 40px; }
.label { width: 100%; height: 22px; gap: 4px; padding-right: 2px; white-space: nowrap; }
.automate { width: 124px; }
.wide { width: 130px; }
.insert { padding: 0 7px; }
.last { width: 98px; background: none; }
.tools .selected { width: 48px; background: #0696d7; }
.tools .selected svg { width: 48px; height: 48px; }

.viewport { flex: 1; position: relative; display: flex; min-height: 500px; }
.scene { position: absolute; inset: 0; width: 100%; height: 100%; }
.overlay { position: relative; flex: 1; display: flex; flex-direction: column; justify-content: space-between; padding: 5px 27px 6px 5px; }
.top { display: flex; justify-content: space-between; }
.panel { display: flex; align-items: center; width: 374px; height: 31px; padding: 0 13px 0 6px; border: 1px solid #c8c8c8; border-bottom-width: 2px; background: #f1f1f1; color: #555; }
.panel h2 { margin-left: 11px; }
.panel button { margin-left: auto; }
.comments h2 { margin-left: 24px; }
.tree { display: grid; gap: 5px; padding-top: 6px; }
.tree li { display: flex; align-items: center; padding-left: 45px; height: 25px; }
.tree .root { padding-left: 22px; }
.twist { width: 10px; height: 14px; margin-right: 13px; }
.root .twist { height: 10px; }
.node { display: flex; align-items: center; height: 25px; padding: 0 14px 0 3px; background: #f2f2f2; }
.eye { width: 20px; height: 14px; margin-right: 11px; }
.folder { width: 21px; height: 16px; margin-right: 17px; }
.gear { width: 16px; height: 16px; margin-right: 17px; }
.views { padding-right: 11px; }
.root .node { padding: 0 9px 0 2px; }
.bar { width: 4px; height: 20px; background: #fbd06a; margin-right: 4px; }
.root .eye { margin-right: 8px; }
.name { display: flex; align-items: center; gap: 18px; height: 21px; margin-right: 4px; padding: 0 12px 0 5px; background: #959595; color: #fff; }
.node input { appearance: none; width: 17px; height: 17px; margin: 0 0 0 14px; border: 1px solid #777; border-radius: 50%; background: radial-gradient(#222 0 2px, #b0b4be 4px, #f2f2f2 8px); }
.cube { margin-top: 16px; }
.axis { font: 14px "Liberation Sans", sans-serif; }
.facename { font: bold 11px "Liberation Sans", sans-serif; fill: #9a9da5; }
.bottom { display: grid; grid-template-columns: 375px 1fr; align-items: start; }
.navbar { display: flex; align-items: center; justify-self: start; gap: 8px; height: 30px; margin-left: calc(29vw - 124px); padding: 0 4px; background: #f2f2f2; }
.navbar svg:first-child { width: 20px; height: 20px; }
.navbar button { gap: 3px; }
.navbar .spaced { gap: 6px; }
.navbar .plain { margin-right: 3px; }

.timeline-panel { display: flex; align-items: flex-start; height: 62px; padding: 9px 16px 0 10px; border-top: 1px solid #ccc; background: #f1f1f1; }
.playback { display: flex; gap: 11px; width: 170px; padding: 10px 0 0 1px; }
.playback svg { width: 20px; height: 20px; }
.history { position: relative; border-top: 7px solid #fdd77a; }
.history ol { display: flex; width: 1345px; padding-top: 3px; }
.history li { flex: none; width: 30px; height: 32px; padding-left: 2px; background: linear-gradient(#ccc, #ccc) 13px 24px / 3px 8px no-repeat, linear-gradient(#ccc, #ccc) 0 30px / 100% 2px no-repeat; }
.history li:first-child { background-position: 13px 24px, 13px 30px; }
.history li:last-child { background-size: 3px 8px, 14px 2px; }
.history li svg { width: 20px; height: 20px; }
.marker { position: absolute; right: -10px; top: -5px; }
.settings { margin: 10px 0 0 auto; }
```
